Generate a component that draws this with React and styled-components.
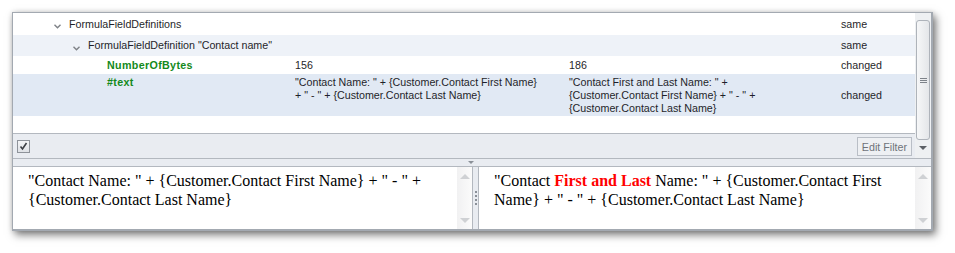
import React from "react";
import styled, { createGlobalStyle } from "styled-components";

const Global = createGlobalStyle`
  html, body { margin: 0; padding: 0; background: #ffffff; }
  body { font-family: "Liberation Sans", Arial, sans-serif; }
`;

const Page = styled.div`
  padding: 12px 0 0 12px;
  width: 955px;
  height: 253px;
  box-sizing: border-box;
`;

const Window = styled.div`
  width: 921px;
  height: 219px;
  box-sizing: border-box;
  border: 1px solid #a3a9b1;
  border-right-width: 2px;
  border-bottom-width: 2px;
  background: #e9ecf1;
  display: flex;
  flex-direction: column;
  box-shadow: 3px 4px 8px rgba(0, 0, 0, 0.5), 0 0 5px rgba(0, 0, 0, 0.14);
`;

const TopSection = styled.div`
  height: 145px;
  display: flex;
  border-bottom: 1px solid #b3b8bf;
`;

const Main = styled.div`
  flex: 1;
  display: flex;
  flex-direction: column;
  min-width: 0;
`;

const Grid = styled.div`
  flex: 1;
  background: #ffffff;
  font-size: 10.7px;
  line-height: 13px;
  color: #1f1f2a;
`;

const Row = styled.div`
  display: grid;
  grid-template-columns: 277px 274px 272px 1fr;
  height: ${(p) => p.$h}px;
  background: ${(p) => p.$bg || "#ffffff"};
`;

const Cell = styled.div`
  padding: ${(p) => (p.$top ? "2px 0 0 5px" : "0 0 0 5px")};
  display: flex;
  align-items: ${(p) => (p.$top ? "flex-start" : "center")};
  white-space: pre-line;
  min-width: 0;
`;

const TreeCell = styled(Cell)`
  padding-left: ${(p) => 56 + p.$level * 19}px;
  position: relative;
`;

const Chevron = styled.svg`
  position: absolute;
  left: ${(p) => 41 + p.$level * 19}px;
  top: 50%;
  margin-top: 0px;
  width: 7px;
  height: 5px;
`;

const FieldName = styled.span`
  font-weight: bold;
  color: #13891b;
  letter-spacing: 0.35px;
`;

const FilterBar = styled.div`
  height: 24px;
  border-top: 1px solid #b3b8bf;
  background: #e9ecf1;
  display: flex;
  align-items: center;
  justify-content: space-between;
  padding: 0 3px 0 4px;
`;

const CheckBox = styled.div`
  width: 11px;
  height: 11px;
  border: 1px solid #8e939a;
  background: linear-gradient(#f3f4f6, #dfe2e6);
  display: flex;
  align-items: center;
  justify-content: center;
`;

const EditButton = styled.button`
  height: 19px;
  padding: 0 4px;
  border: 1px solid #b9bec6;
  background: #eef0f3;
  color: #6f737a;
  font-family: "Liberation Sans", Arial, sans-serif;
  font-size: 10.7px;
  margin-top: 1px;
`;

const VScroll = styled.div`
  width: 16px;
  background: #eef0f2;
  display: flex;
  flex-direction: column;
  align-items: center;
  padding-top: 7px;
  box-sizing: border-box;
`;

const Thumb = styled.div`
  width: 14px;
  height: 120px;
  box-sizing: border-box;
  border: 1px solid #aeb3ba;
  border-radius: 3px;
  background: linear-gradient(to right, #f6f7f8, #e4e6e9);
  display: flex;
  flex-direction: column;
  align-items: center;
  justify-content: center;
  gap: 1px;
`;

const Grip = styled.div`
  width: 7px;
  height: 1px;
  background: #7d8289;
`;

const ArrowDown = styled.div`
  margin-top: 6px;
  width: 0;
  height: 0;
  border-left: 4px solid transparent;
  border-right: 4px solid transparent;
  border-top: 4px solid #5c6066;
`;

const HSplitter = styled.div`
  height: 7px;
  border-bottom: 1px solid #b3b8bf;
  background: #e9ecf1;
  position: relative;
`;

const SplitMark = styled.div`
  position: absolute;
  left: 455px;
  top: 2px;
  width: 0;
  height: 0;
  border-left: 3px solid transparent;
  border-right: 3px solid transparent;
  border-top: 3px solid #8a9098;
`;

const Bottom = styled.div`
  flex: 1;
  display: flex;
`;

const Pane = styled.div`
  background: #ffffff;
  display: flex;
  width: ${(p) => (p.$w ? `${p.$w}px` : "auto")};
  flex: ${(p) => (p.$w ? "none" : "1")};
  border-right: ${(p) => (p.$w ? "1px solid #b3b8bf" : "none")};
  border-left: ${(p) => (p.$w ? "none" : "1px solid #b3b8bf")};
  min-width: 0;
`;

const PaneText = styled.div`
  flex: 1;
  padding: 4px 8px 0 ${(p) => p.$pl}px;
  font-family: "Liberation Serif", "Times New Roman", serif;
  font-size: 16px;
  line-height: 19px;
  color: #000000;
`;

const Red = styled.span`
  color: #ff0000;
  font-weight: bold;
`;

const PaneScroll = styled.div`
  width: ${(p) => p.$w}px;
  background: linear-gradient(to right, #f1f1f2, #fbfbfb);
  display: flex;
  flex-direction: column;
  align-items: center;
  justify-content: space-between;
  padding: 7px 0 6px;
  box-sizing: border-box;
`;

const SmallArrow = styled.div`
  width: 0;
  height: 0;
  border-left: 5px solid transparent;
  border-right: 5px solid transparent;
  ${(p) =>
    p.$up
      ? "border-bottom: 5px solid #cfd1d4;"
      : "border-top: 5px solid #cfd1d4;"}
`;

const VSplitter = styled.div`
  width: 5px;
  background: #e9ecf1;
  display: flex;
  flex-direction: column;
  align-items: center;
  justify-content: center;
  gap: 2px;
`;

const Dot = styled.div`
  width: 2px;
  height: 2px;
  background: #8a9098;
`;

const ChevronIcon = ({ level }) => (
  <Chevron $level={level} viewBox="0 0 7 5">
    <path d="M0.5 0.8 L3.5 3.8 L6.5 0.8" fill="none" stroke="#7e8287" strokeWidth="1.4" />
  </Chevron>
);

export default function App() {
  return (
    <>
      <Global />
      <Page>
        <Window>
          <TopSection>
            <Main>
              <Grid>
                <Row $h={22}>
                  <TreeCell $level={0}>
                    <ChevronIcon level={0} />
                    FormulaFieldDefinitions
                  </TreeCell>
                  <Cell />
                  <Cell />
                  <Cell>same</Cell>
                </Row>
                <Row $h={21} $bg="#eef2f8">
                  <TreeCell $level={1}>
                    <ChevronIcon level={1} />
                    FormulaFieldDefinition "Contact name"
                  </TreeCell>
                  <Cell />
                  <Cell />
                  <Cell>same</Cell>
                </Row>
                <Row $h={18}>
                  <TreeCell $level={2}>
                    <FieldName>NumberOfBytes</FieldName>
                  </TreeCell>
                  <Cell>156</Cell>
                  <Cell>186</Cell>
                  <Cell>changed</Cell>
                </Row>
                <Row $h={42} $bg="#e1e9f4">
                  <TreeCell $level={2} $top>
                    <FieldName>#text</FieldName>
                  </TreeCell>
                  <Cell $top>
                    {'"Contact Name: " + {Customer.Contact First Name}\n+ " - " + {Customer.Contact Last Name}'}
                  </Cell>
                  <Cell $top>
                    {'"Contact First and Last Name: " +\n{Customer.Contact First Name} + " - " +\n{Customer.Contact Last Name}'}
                  </Cell>
                  <Cell>changed</Cell>
                </Row>
              </Grid>
              <FilterBar>
                <CheckBox>
                  <svg width="9" height="9" viewBox="0 0 9 9">
                    <path d="M1.5 4.5 L3.5 7 L7.5 1" fill="none" stroke="#3c3f44" strokeWidth="1.6" />
                  </svg>
                </CheckBox>
                <EditButton>Edit Filter</EditButton>
              </FilterBar>
            </Main>
            <VScroll>
              <Thumb>
                <Grip />
                <Grip />
                <Grip />
              </Thumb>
              <ArrowDown />
            </VScroll>
          </TopSection>
          <HSplitter>
            <SplitMark />
          </HSplitter>
          <Bottom>
            <Pane $w={459}>
              <PaneText $pl={15}>
                "Contact Name: " + {"{"}Customer.Contact First Name{"}"} + " - " + {"{"}Customer.Contact Last Name{"}"}
              </PaneText>
              <PaneScroll $w={15}>
                <SmallArrow $up />
                <SmallArrow />
              </PaneScroll>
            </Pane>
            <VSplitter>
              <Dot />
              <Dot />
              <Dot />
              <Dot />
            </VSplitter>
            <Pane>
              <PaneText $pl={15}>
                "Contact <Red>First and Last</Red> Name: " + {"{"}Customer.Contact First Name{"}"} + " - " + {"{"}Customer.Contact Last Name{"}"}
              </PaneText>
              <PaneScroll $w={16}>
                <SmallArrow $up />
                <SmallArrow />
              </PaneScroll>
            </Pane>
          </Bottom>
        </Window>
      </Page>
    </>
  );
}
